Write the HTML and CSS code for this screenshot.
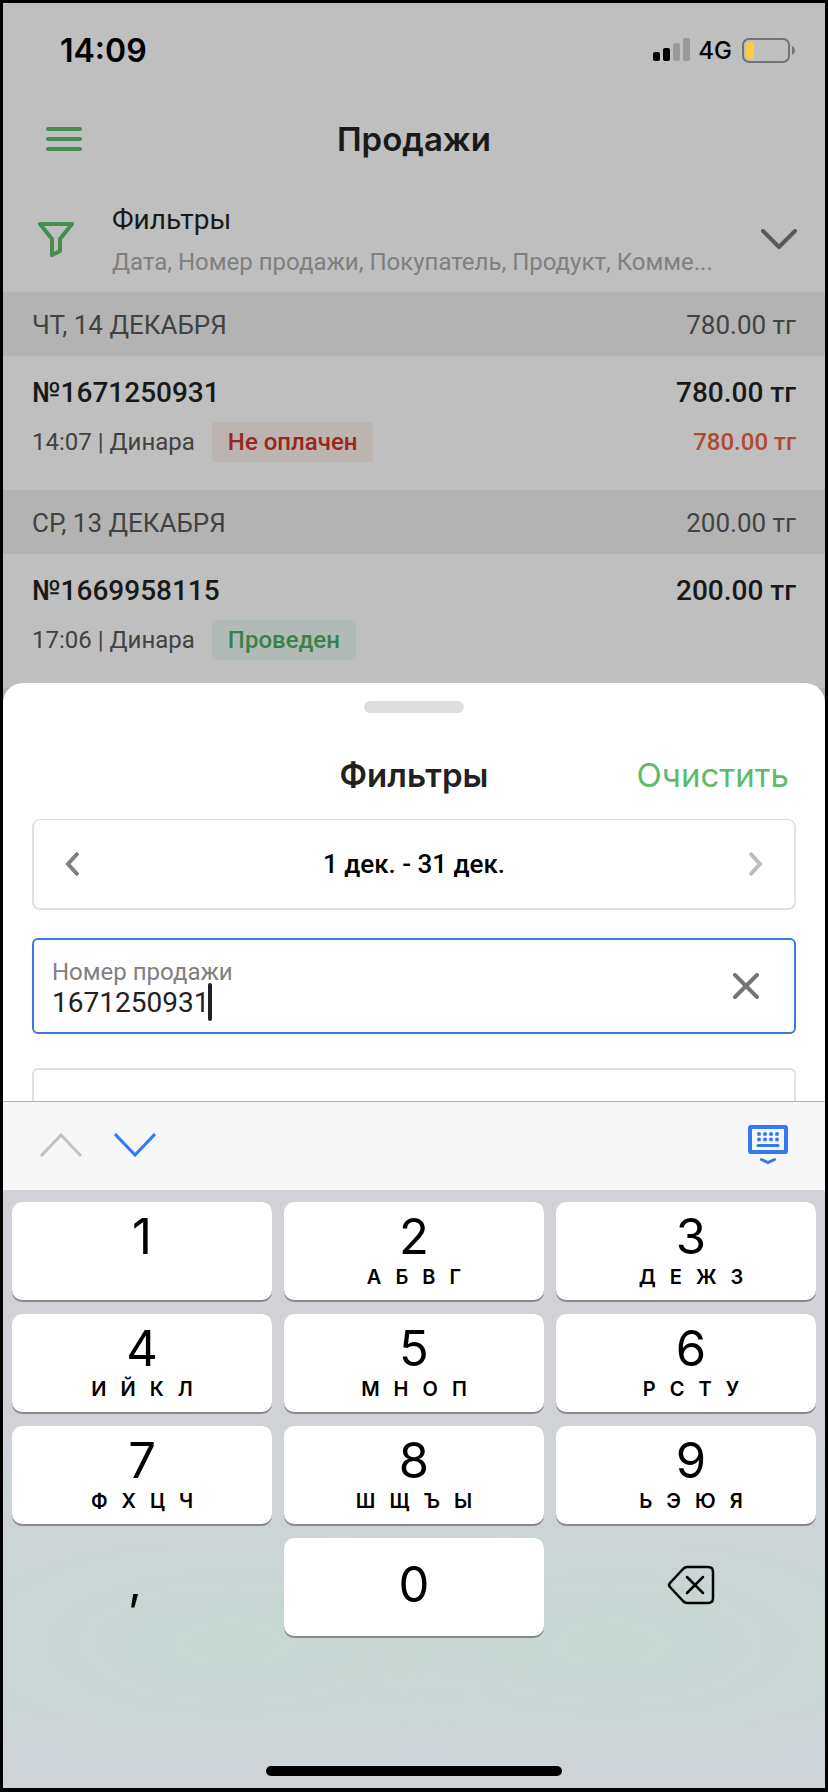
FILE: index.html
```html
<!DOCTYPE html>
<html lang="ru">
<head>
    <meta charset="UTF-8">
    <meta name="viewport" content="width=device-width, initial-scale=1.0">
    <title>Продажи</title>
    <link rel="stylesheet" href="styles.css">
</head>
<body>
    <div class="screen">
        <div class="app">
            <div class="status">
                <span class="time">14:09</span>
                <svg class="signal" width="37" height="24" viewBox="0 0 37 24">
                    <rect x="0" y="14" width="7" height="9" rx="2" fill="#000"/>
                    <rect x="10" y="10" width="7" height="13" rx="2" fill="#000"/>
                    <rect x="20" y="5" width="7" height="18" rx="2" fill="#999"/>
                    <rect x="30" y="0" width="7" height="23" rx="2" fill="#999"/>
                </svg>
                <span class="net">4G</span>
                <svg class="battery" width="53" height="25" viewBox="0 0 53 25">
                    <rect x="1" y="1" width="46" height="23" rx="6" fill="none" stroke="#737373" stroke-width="2"/>
                    <rect x="4" y="4" width="8" height="17" rx="3" fill="#f8cd46"/>
                    <path d="M50 8c4 2 4 7 0 9z" fill="#737373"/>
                </svg>
            </div>
            <header class="header">
                <button class="menu" aria-label="Меню">
                    <svg width="36" height="24" viewBox="0 0 36 24" stroke="#448c50" stroke-width="4" stroke-linecap="round">
                        <path d="M2 2h32M2 12h32M2 22h32"/>
                    </svg>
                </button>
                <h1>Продажи</h1>
            </header>
            <div class="filters">
                <svg class="funnel" width="36" height="36" viewBox="0 0 36 36" fill="none" stroke="#448c50" stroke-width="4" stroke-linejoin="round">
                    <path d="M2 3h32L22 18v12l-8 4V18z"/>
                </svg>
                <div class="filters-text">
                    <div class="filters-name">Фильтры</div>
                    <div class="filters-hint">Дата, Номер продажи, Покупатель, Продукт, Комме...</div>
                </div>
                <button class="open" aria-label="Открыть фильтры">
                    <svg width="36" height="20" viewBox="0 0 36 20" fill="none" stroke="#595959" stroke-width="4" stroke-linecap="round" stroke-linejoin="round">
                        <path d="M2 2l16 16L34 2"/>
                    </svg>
                </button>
            </div>
            <div class="day"><span>ЧТ, 14 ДЕКАБРЯ</span><span>780.00 тг</span></div>
            <div class="sale">
                <div class="line main"><span>№1671250931</span><span>780.00 тг</span></div>
                <div class="line">
                    <span>14:07 | Динара</span>
                    <span class="badge unpaid">Не оплачен</span>
                    <span class="debt">780.00 тг</span>
                </div>
            </div>
            <div class="day"><span>СР, 13 ДЕКАБРЯ</span><span>200.00 тг</span></div>
            <div class="sale">
                <div class="line main"><span>№1669958115</span><span>200.00 тг</span></div>
                <div class="line">
                    <span>17:06 | Динара</span>
                    <span class="badge done">Проведен</span>
                </div>
            </div>
            <div class="day-edge"></div>
        </div>

        <div class="sheet">
            <div class="handle"></div>
            <div class="sheet-head">
                <h2>Фильтры</h2>
                <button class="clear">Очистить</button>
            </div>
            <div class="period">
                <button aria-label="Назад">
                    <svg width="14" height="24" viewBox="0 0 14 24" fill="none" stroke="#808080" stroke-width="4">
                        <path d="M13 1L3 12l10 11"/>
                    </svg>
                </button>
                <span>1 дек. - 31 дек.</span>
                <button aria-label="Вперед">
                    <svg width="14" height="24" viewBox="0 0 14 24" fill="none" stroke="#bdbdbd" stroke-width="4">
                        <path d="M1 1l10 11L1 23"/>
                    </svg>
                </button>
            </div>
            <div class="field">
                <div class="field-text">
                    <label for="number">Номер продажи</label>
                    <div class="value">
                        <input type="text" id="number" value="1671250931">
                        <span class="caret"></span>
                    </div>
                </div>
                <button aria-label="Стереть">
                    <svg width="26" height="26" viewBox="0 0 26 26" stroke="#757575" stroke-width="4" stroke-linecap="round">
                        <path d="M2 2l22 22M24 2L2 24"/>
                    </svg>
                </button>
            </div>
            <div class="next-field"></div>
        </div>

        <div class="toolbar">
            <button aria-label="Предыдущее поле">
                <svg width="42" height="24" viewBox="0 0 42 24" fill="none" stroke="#c1c1c1" stroke-width="3">
                    <path d="M1 23L21 2l20 21"/>
                </svg>
            </button>
            <button aria-label="Следующее поле">
                <svg width="42" height="24" viewBox="0 0 42 24" fill="none" stroke="#3478f6" stroke-width="3">
                    <path d="M1 1l20 21L41 1"/>
                </svg>
            </button>
            <button class="hide" aria-label="Скрыть клавиатуру">
                <svg width="40" height="40" viewBox="0 0 40 40" fill="none" stroke="#3478f6">
                    <rect x="2" y="2" width="36" height="25" rx="1" stroke-width="4"/>
                    <path d="M11 9h.01M17 9h.01M23 9h.01M29 9h.01M11 14.500h.01M17 14.500h.01M23 14.500h.01M29 14.500h.01" stroke-width="4" stroke-linecap="round"/>
                    <path d="M10 20.500h20" stroke-width="3" stroke-linecap="round"/>
                    <path d="M13.500 34.500l6.500 3 6.500-3" stroke-width="3" stroke-linecap="round"/>
                </svg>
            </button>
        </div>

        <div class="keyboard">
            <div class="keys">
                <button class="key"><b>1</b></button>
                <button class="key"><b>2</b><span class="letters"><i>А</i><i>Б</i><i>В</i><i>Г</i></span></button>
                <button class="key right"><b>3</b><span class="letters"><i>Д</i><i>Е</i><i>Ж</i><i>З</i></span></button>
                <button class="key"><b>4</b><span class="letters"><i>И</i><i>Й</i><i>К</i><i>Л</i></span></button>
                <button class="key"><b>5</b><span class="letters"><i>М</i><i>Н</i><i>О</i><i>П</i></span></button>
                <button class="key right"><b>6</b><span class="letters"><i>Р</i><i>С</i><i>Т</i><i>У</i></span></button>
                <button class="key"><b>7</b><span class="letters"><i>Ф</i><i>Х</i><i>Ц</i><i>Ч</i></span></button>
                <button class="key"><b>8</b><span class="letters"><i>Ш</i><i>Щ</i><i>Ъ</i><i>Ы</i></span></button>
                <button class="key right"><b>9</b><span class="letters"><i>Ь</i><i>Э</i><i>Ю</i><i>Я</i></span></button>
                <button class="key plain comma"><b>,</b></button>
                <button class="key zero"><b>0</b></button>
                <button class="key plain right" aria-label="Удалить">
                    <svg width="48" height="40" viewBox="0 0 48 40" fill="none" stroke="#000" stroke-linecap="round" stroke-linejoin="round">
                        <path d="M20 2h21q5 0 5 5v26q0 5-5 5H20q-2 0-4-2L3 22q-2-2 0-4L16 4q2-2 4-2z" stroke-width="2.500"/>
                        <path d="M20 12l16 16M36 12L20 28" stroke-width="2.500"/>
                    </svg>
                </button>
            </div>
            <div class="home"></div>
        </div>
    </div>
</body>
</html>
```
FILE: styles.css
```css
*{
    margin: 0;
    padding: 0;
    box-sizing: border-box;
}
body{
    font-family: Roboto, "Liberation Sans", sans-serif;
    background-color: #000;
}
button{
    display: flex;
    align-items: center;
    border: none;
    background: none;
    font-family: inherit;
}
svg{
    display: block;
}
.screen{
    display: flex;
    flex-direction: column;
    min-height: 100vh;
    border: 3px solid #000;
    border-bottom-width: 4px;
}

/* список продаж */
.app{
    background-color: #bfbfbf;
    color: #191919;
}
.status{
    display: flex;
    align-items: center;
    height: 94px;
    padding: 0 30px 0 57px;
    color: #000;
    font-family: Inter, sans-serif;
}
.time{
    flex: 1;
    font-size: 32px;
    font-weight: 600;
}
.net{
    margin: 0 10px 0 8px;
    font-size: 24px;
    font-weight: 500;
}
.header{
    display: grid;
    grid-template-columns: 1fr auto 1fr;
    align-items: center;
    height: 84px;
    padding: 0 43px;
}
h1, h2{
    font-family: Inter, sans-serif;
    font-size: 33px;
    font-weight: 600;
}
.filters{
    display: flex;
    align-items: center;
    height: 111px;
    padding: 4px 28px 0 35px;
}
.filters-text{
    flex: 1;
    min-width: 0;
    padding: 6px 0 0 38px;
}
.filters-name{
    font-size: 28px;
    line-height: 40px;
}
.filters-hint{
    overflow: hidden;
    color: #808080;
    font-size: 24px;
    line-height: 44px;
    white-space: nowrap;
}
.day{
    display: flex;
    justify-content: space-between;
    align-items: center;
    height: 64px;
    padding: 2px 29px 0;
    background-color: #b3b3b3;
    color: #424242;
    font-size: 26px;
}
.sale{
    height: 134px;
    padding: 16px 29px 0;
}
.line{
    display: flex;
    align-items: center;
    height: 40px;
    color: #424242;
    font-size: 24px;
}
.main{
    justify-content: space-between;
    margin-bottom: 10px;
    color: #191919;
    font-size: 28px;
    font-weight: 500;
}
.badge{
    margin-left: 17px;
    padding: 0 16px;
    border-radius: 4px;
    font-weight: 500;
    line-height: 40px;
}
.unpaid{
    background-color: #bbb4b0;
    color: #9b251f;
}
.done{
    background-color: #b1bab7;
    color: #3b8048;
}
.debt{
    margin-left: auto;
    color: #b04a31;
    font-weight: 500;
}
.day-edge{
    height: 15px;
    background-color: #b3b3b3;
}

/* шторка с фильтрами */
.sheet{
    position: relative;
    margin-top: -20px;
    padding: 18px 29px 0;
    border-radius: 20px 20px 0 0;
    background-color: #fff;
}
.handle{
    width: 100px;
    height: 12px;
    margin: 0 auto;
    border-radius: 6px;
    background-color: #dedede;
}
.sheet-head{
    display: grid;
    grid-template-columns: 1fr auto 1fr;
    align-items: center;
    height: 80px;
    margin: 22px 0 4px;
    color: #212121;
}
h2{
    grid-column: 2;
}
.clear{
    justify-self: end;
    padding-right: 7px;
    color: #5bbb6a;
    font-family: Inter, sans-serif;
    font-size: 33px;
}
.period{
    display: flex;
    justify-content: space-between;
    align-items: center;
    height: 91px;
    margin-bottom: 28px;
    padding: 0 31px;
    border: 2px solid #e0e0e0;
    border-top-width: 1px;
    border-radius: 8px;
    color: #000;
    font-size: 26px;
    font-weight: 500;
}
.field{
    display: flex;
    justify-content: space-between;
    align-items: center;
    height: 96px;
    padding: 0 35px 0 18px;
    border: 2px solid #3b7ae6;
    border-radius: 6px;
}
.field-text{
    padding-top: 4px;
}
.field label{
    display: block;
    color: #808080;
    font-size: 24px;
    line-height: 28px;
}
.value{
    display: flex;
    align-items: center;
    height: 32px;
}
.value input{
    width: 158px;
    border: none;
    outline: none;
    color: #212121;
    font-family: inherit;
    font-size: 28px;
}
.caret{
    width: 4px;
    height: 38px;
    margin-left: -2px;
    border-radius: 2px;
    background-color: #212121;
}
.next-field{
    height: 33px;
    margin-top: 34px;
    border: 2px solid #e0e0e0;
    border-bottom: none;
    border-radius: 6px 6px 0 0;
}

/* клавиатура */
.toolbar{
    display: flex;
    align-items: center;
    gap: 32px;
    height: 89px;
    padding: 0 37px 2px;
    border-top: 1px solid #b0b0b0;
    background-color: #f7f7f7;
}
.hide{
    margin-left: auto;
}
.keyboard{
    display: flex;
    flex: 1;
    flex-direction: column;
    padding: 12px 9px;
    background:
        radial-gradient(ellipse 300px 120px at 28% 76%, rgba(196, 216, 208, 0.8), rgba(196, 216, 208, 0)),
        radial-gradient(ellipse 300px 120px at 74% 76%, rgba(196, 216, 208, 0.8), rgba(196, 216, 208, 0)),
        linear-gradient(#d1d2d8 35%, #ccd4d6 60%, #ccd4d6 88%, #cfd3d8);
}
.keys{
    display: grid;
    grid-template-columns: repeat(3, 1fr);
    gap: 14px 12px;
}
.key{
    display: flex;
    flex-direction: column;
    height: 98px;
    padding-top: 5px;
    border-radius: 10px;
    background-color: #fff;
    box-shadow: 0 2px 0 #868a8d;
    color: #000;
    font-family: Inter, sans-serif;
}
.key b{
    font-size: 49px;
    font-weight: 400;
    line-height: 60px;
}
.letters{
    display: flex;
    gap: 14px;
    font-size: 20px;
    font-weight: 600;
    line-height: 20px;
}
.letters i{
    font-style: normal;
}
.right{
    padding-left: 10px;
}
.zero, .plain{
    justify-content: center;
    padding-top: 0;
    padding-bottom: 5px;
}
.plain{
    background: none;
    box-shadow: none;
}
.comma{
    padding-right: 14px;
    padding-bottom: 10px;
}
.home{
    width: 296px;
    height: 10px;
    margin: auto auto 0;
    border-radius: 5px;
    background-color: #000;
}
```
